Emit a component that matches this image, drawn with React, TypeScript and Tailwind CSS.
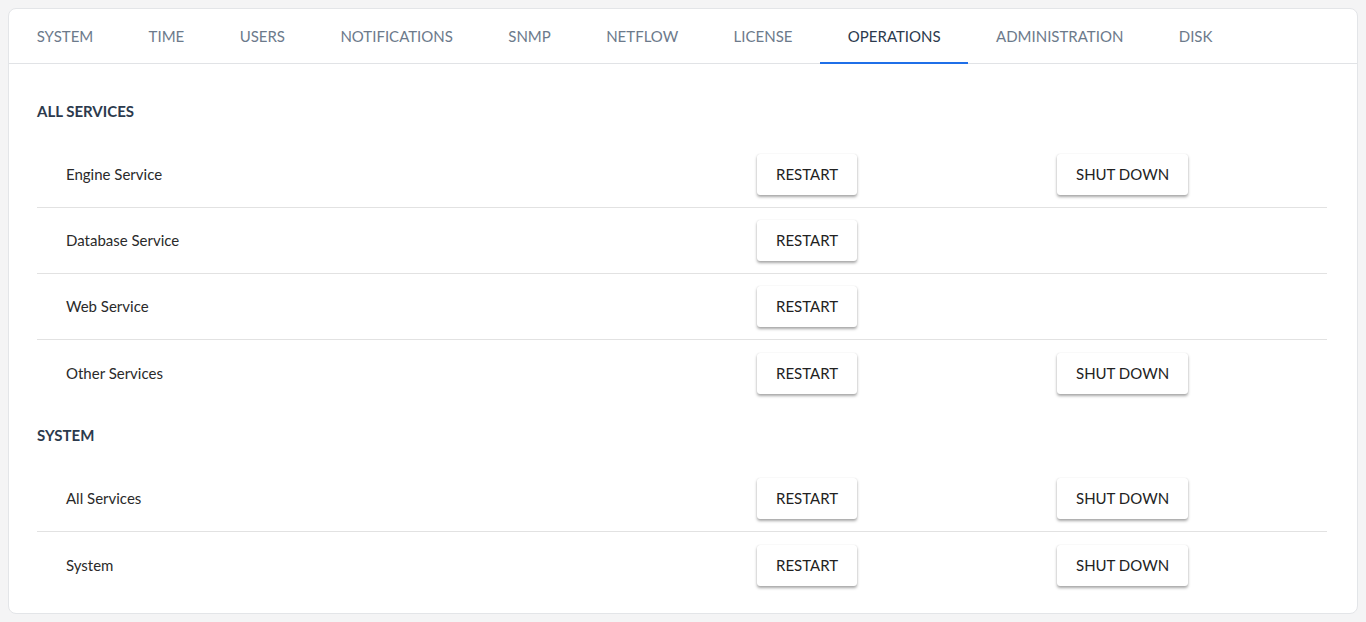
const tabs = ["SYSTEM", "TIME", "USERS", "NOTIFICATIONS", "SNMP", "NETFLOW", "LICENSE", "OPERATIONS", "ADMINISTRATION", "DISK"]

const sections = [
  {
    title: "ALL SERVICES",
    rows: [
      { name: "Engine Service", shutdown: true },
      { name: "Database Service", shutdown: false },
      { name: "Web Service", shutdown: false },
      { name: "Other Services", shutdown: true },
    ],
  },
  {
    title: "SYSTEM",
    rows: [
      { name: "All Services", shutdown: true },
      { name: "System", shutdown: true },
    ],
  },
]

function ActionButton({ label }: { label: string }) {
  return (
    <button className="h-[41px] px-[19px] bg-white rounded-[3px] text-[15px] text-[#222] shadow-[0_2px_3px_rgba(0,0,0,0.35),0_0_1px_rgba(0,0,0,0.15)]">
      {label}
    </button>
  )
}

export default function App() {
  return (
    <div className="min-h-screen bg-[#f4f4f5] p-2 font-['Lato','Noto_Sans',sans-serif]">
      <div className="bg-white border border-[#e3e5e8] rounded-lg">
        <div className="flex border-b border-[#e1e3e6] h-[55px]">
          {tabs.map((tab) => (
            <div
              key={tab}
              className={
                tab === "OPERATIONS"
                  ? "px-[27.7px] pt-[2px] flex items-center text-[15px] text-[#2c3a4d] border-b-2 border-[#1f6fe8] -mb-px"
                  : "px-[27.7px] pt-[2px] flex items-center text-[15px] text-[#6c7a8b] border-b-2 border-transparent -mb-px"
              }
            >
              {tab}
            </div>
          ))}
        </div>
        <div className="px-7 pt-[18px] pb-[15px]">
          {sections.map((section) => (
            <div key={section.title}>
              <div className="h-[60px] pb-[2px] flex items-center text-[15px] font-bold text-[#2c3a4d]">
                {section.title}
              </div>
              {section.rows.map((row, i) => {
                const last = i === section.rows.length - 1
                const cell = last
                  ? "h-[66px] flex items-center"
                  : "h-[66px] flex items-center border-b border-[#e2e2e2]"
                return (
                  <div key={row.name} className="grid grid-cols-[689px_301px_300px]">
                    <div className={cell + " pl-[29px] text-[15px] text-[#2a2a2a]"}>{row.name}</div>
                    <div className={cell + " pl-[31px]"}>
                      <ActionButton label="RESTART" />
                    </div>
                    <div className={cell + " pl-[30px]"}>
                      {row.shutdown && <ActionButton label="SHUT DOWN" />}
                    </div>
                  </div>
                )
              })}
            </div>
          ))}
        </div>
      </div>
    </div>
  )
}
